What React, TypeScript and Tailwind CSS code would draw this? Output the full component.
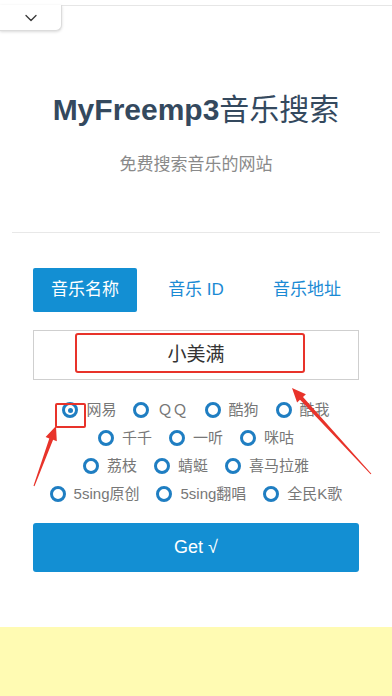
import { ChevronDown } from "lucide-react";

const ROWS: { label: string; checked?: boolean }[][] = [
  [{ label: "网易", checked: true }, { label: "ＱＱ" }, { label: "酷狗" }, { label: "酷我" }],
  [{ label: "千千" }, { label: "一听" }, { label: "咪咕" }],
  [{ label: "荔枝" }, { label: "蜻蜓" }, { label: "喜马拉雅" }],
  [{ label: "5sing原创" }, { label: "5sing翻唱" }, { label: "全民K歌" }],
];

function Radio({ label, checked }: { label: string; checked?: boolean }) {
  return (
    <label className="flex items-center gap-[8px] text-[15px] text-[#777]">
      <span className="w-[16px] h-[16px] rounded-full border-[3px] border-[#1f7ec2] grid place-items-center">
        {checked && <span className="w-[5px] h-[5px] rounded-full bg-[#1f7ec2]" />}
      </span>
      {label}
    </label>
  );
}

export default function App() {
  return (
    <div
      className="relative w-full h-[696px] bg-white overflow-hidden flex flex-col"
      style={{ fontFamily: '"Liberation Sans", "Noto Sans CJK SC", sans-serif' }}
    >
      <div className="mt-[5px] border-t border-[#e6e6e6]" />

      <div className="pt-[86px] flex flex-col items-center">
        <h1 className="text-[30px] leading-[36px] font-bold text-[#34495e]">
          MyFreemp3<span className="font-normal">音乐搜索</span>
        </h1>
        <p className="mt-[25px] text-[17px] leading-[24px] text-[#8a8a8a]">免费搜索音乐的网站</p>
      </div>

      <hr className="mt-[55px] mx-3 border-[#e8e8e8]" />

      <div className="mx-[33px] mt-[35px] flex flex-col">
        <div className="flex justify-between">
          <button className="h-[44px] px-[18px] bg-[#138fd3] text-white text-[17px] rounded-[2px]">音乐名称</button>
          <button className="h-[44px] px-[18px] text-[#1a8ad4] text-[17px]">音乐 ID</button>
          <button className="h-[44px] px-[18px] text-[#1a8ad4] text-[17px]">音乐地址</button>
        </div>

        <div className="mt-[18px] h-[50px] border border-[#cfcfcf] flex items-center justify-center text-[19px] text-[#333]">
          小美满
        </div>

        <div className="mt-[16px] flex flex-col">
          {ROWS.map((row, i) => (
            <div key={i} className="h-[28px] flex items-center justify-center gap-x-[17px]">
              {row.map((r) => (
                <Radio key={r.label} label={r.label} checked={r.checked} />
              ))}
            </div>
          ))}
        </div>

        <button className="mt-[15px] h-[49px] bg-[#138fd3] text-white text-[18px] rounded-[3px]">Get √</button>
      </div>

      <div className="mt-[55px] flex-1 bg-[#fffbb3]" />

      {/* browser tab handle */}
      <div className="absolute left-0 top-[5px] w-[62px] h-[26px] bg-white border-r border-b border-[#dcdcdc] rounded-br-[6px] shadow-[0_1px_3px_rgba(0,0,0,0.15)] flex items-center justify-center">
        <ChevronDown className="w-[20px] h-[20px] text-[#3a3a3a]" strokeWidth={1.6} />
      </div>

      {/* annotations */}
      <div className="absolute left-[75px] top-[333px] w-[230px] h-[40px] border-2 border-[#e8332a] rounded-[3px]" />
      <div className="absolute left-[55px] top-[403px] w-[31px] h-[25px] border-2 border-[#e8332a] rounded-[2px]" />
      <svg className="absolute left-0 top-0 pointer-events-none" width="392" height="696" viewBox="0 0 392 696">
        <polygon
          fill="#e8332a"
          points="56,426 56.8,441.2 53.1,439.8 34.5,486.2 33.5,485.8 49.3,438.4 45.6,437"
        />
        <polygon
          fill="#e8332a"
          points="292,388 305.9,394.2 303,396.9 371.4,473.7 370.6,474.3 300,399.7 297.1,402.4"
        />
      </svg>
    </div>
  );
}
